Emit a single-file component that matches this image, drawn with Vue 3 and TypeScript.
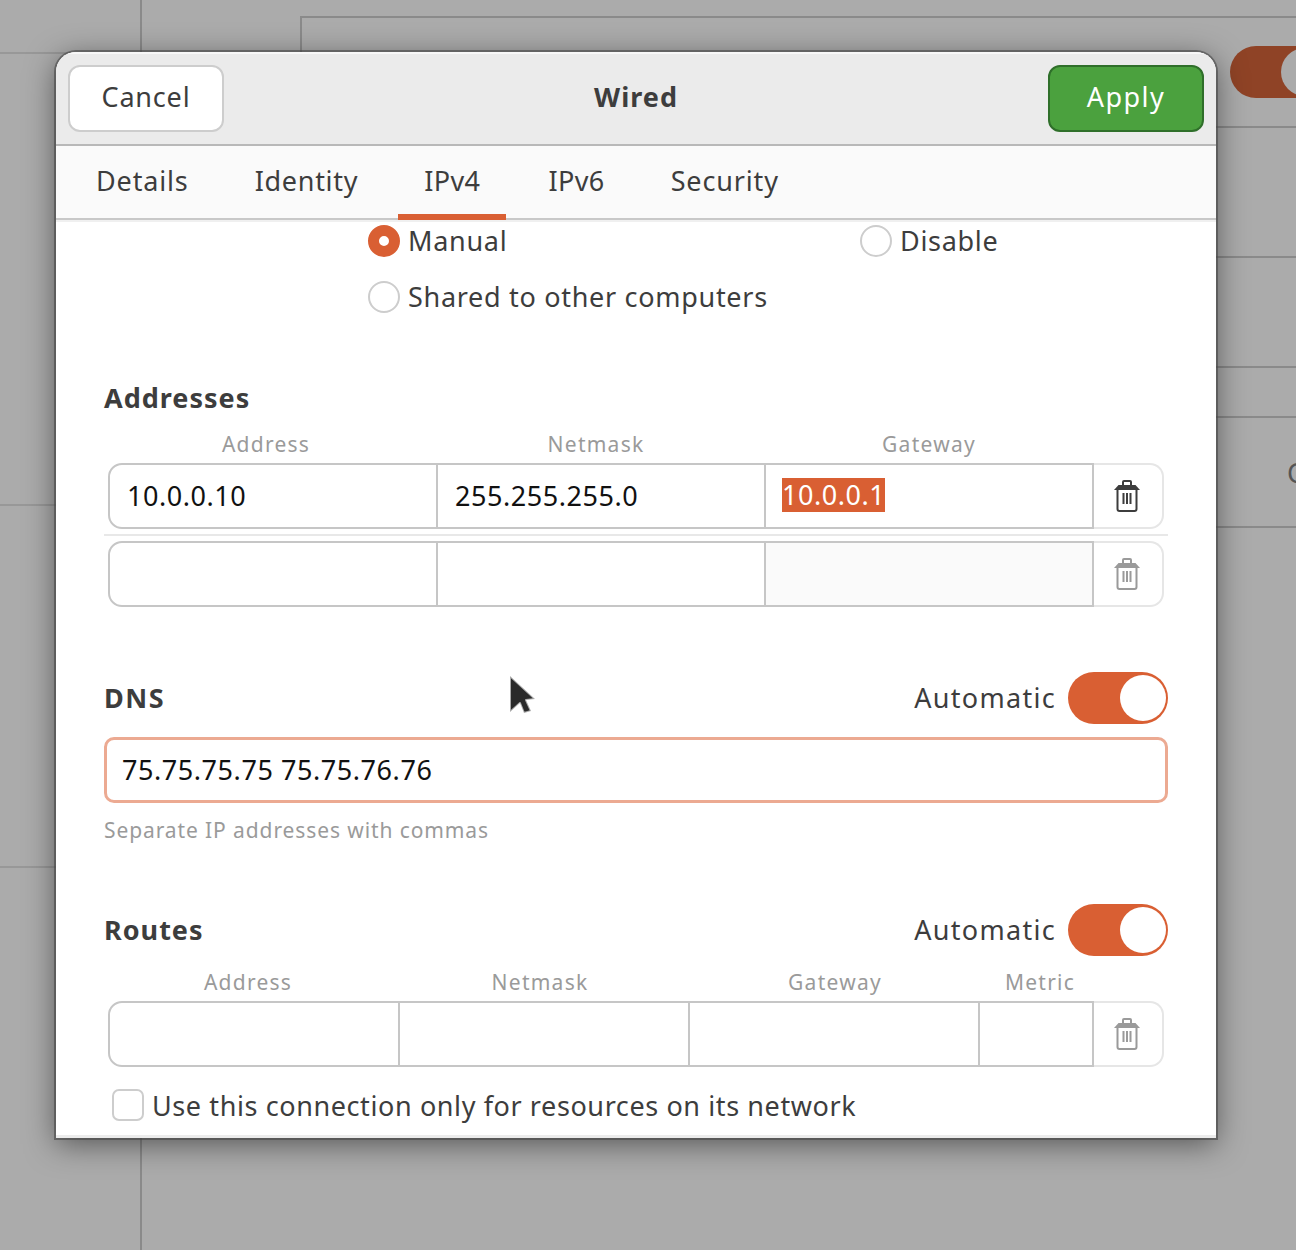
<template>
  <div class="desktop">
    <!-- dimmed window behind the dialog -->
    <div class="bg-line v" style="left: 140px; top: 0; height: 1250px"></div>
    <div class="bg-line h faint" style="left: 0; top: 52px; width: 141px"></div>
    <div class="bg-line h faint" style="left: 0; top: 504px; width: 60px"></div>
    <div class="bg-line h faint" style="left: 0; top: 866px; width: 60px"></div>
    <div class="bg-line v" style="left: 300px; top: 16px; height: 40px"></div>
    <div class="bg-line h" style="left: 300px; top: 16px; width: 996px"></div>
    <div class="bg-line h" v-for="y in rightLines" :key="y" :style="{ left: '1210px', top: y + 'px', width: '86px' }"></div>
    <div class="bg-switch"></div>
    <div class="bg-knob"></div>
    <div class="bg-letter">C</div>

    <div class="dialog">
      <header class="titlebar">
        <button class="btn">Cancel</button>
        <div class="title">Wired</div>
        <button class="btn apply">Apply</button>
      </header>

      <nav class="tabs">
        <div v-for="t in tabs" :key="t" class="tab" :class="{ active: t === 'IPv4' }">{{ t }}</div>
      </nav>

      <main class="content">
        <div class="radios">
          <div class="radio-row">
            <span class="radio checked"></span><span class="radio-label">Manual</span>
          </div>
          <div class="radio-row disable">
            <span class="radio"></span><span class="radio-label">Disable</span>
          </div>
          <div class="radio-row shared">
            <span class="radio"></span><span class="radio-label">Shared to other computers</span>
          </div>
        </div>

        <h3 class="section addresses">Addresses</h3>
        <div class="col-labels addr-cols">
          <span>Address</span><span>Netmask</span><span>Gateway</span>
        </div>
        <div class="row addr-cols">
          <div class="cell">10.0.0.10</div>
          <div class="cell">255.255.255.0</div>
          <div class="cell"><span class="selected">10.0.0.1</span></div>
          <div class="trash">
            <svg width="26" height="32" viewBox="0 0 26 32" fill="none" stroke="#3d3d3d" stroke-width="2">
              <path d="M9 5V2a1 1 0 0 1 1-1h6a1 1 0 0 1 1 1v3" />
              <path d="M4.5 5h17L26 10H0Z" fill="#3d3d3d" stroke="none" />
              <path d="M3.5 10v19a2 2 0 0 0 2 2h15a2 2 0 0 0 2-2V10" />
              <path d="M9.5 13v11M13 13v11M16.500 13v11" />
            </svg>
          </div>
        </div>
        <div class="row-sep"></div>
        <div class="row addr-cols">
          <div class="cell"></div>
          <div class="cell"></div>
          <div class="cell shaded"></div>
          <div class="trash">
            <svg width="26" height="32" viewBox="0 0 26 32" fill="none" stroke="#9a9a9a" stroke-width="2">
              <path d="M9 5V2a1 1 0 0 1 1-1h6a1 1 0 0 1 1 1v3" />
              <path d="M4.5 5h17L26 10H0Z" fill="#9a9a9a" stroke="none" />
              <path d="M3.5 10v19a2 2 0 0 0 2 2h15a2 2 0 0 0 2-2V10" />
              <path d="M9.5 13v11M13 13v11M16.500 13v11" />
            </svg>
          </div>
        </div>

        <div class="section-head dns-head">
          <h3 class="section dns-title">DNS</h3>
          <div class="auto">
            <span>Automatic</span>
            <span class="switch"><span class="knob"></span></span>
          </div>
        </div>
        <div class="dns-input">75.75.75.75 75.75.76.76</div>
        <div class="hint">Separate IP addresses with commas</div>

        <div class="section-head routes-head">
          <h3 class="section">Routes</h3>
          <div class="auto">
            <span>Automatic</span>
            <span class="switch"><span class="knob"></span></span>
          </div>
        </div>
        <div class="col-labels route-cols">
          <span>Address</span><span>Netmask</span><span>Gateway</span><span>Metric</span>
        </div>
        <div class="row route-cols">
          <div class="cell"></div>
          <div class="cell"></div>
          <div class="cell"></div>
          <div class="cell"></div>
          <div class="trash">
            <svg width="26" height="32" viewBox="0 0 26 32" fill="none" stroke="#9a9a9a" stroke-width="2">
              <path d="M9 5V2a1 1 0 0 1 1-1h6a1 1 0 0 1 1 1v3" />
              <path d="M4.5 5h17L26 10H0Z" fill="#9a9a9a" stroke="none" />
              <path d="M3.5 10v19a2 2 0 0 0 2 2h15a2 2 0 0 0 2-2V10" />
              <path d="M9.5 13v11M13 13v11M16.500 13v11" />
            </svg>
          </div>
        </div>
        <div class="check-row">
          <span class="checkbox"></span>
          <span>Use this connection only for resources on its network</span>
        </div>
      </main>
    </div>

    <svg class="cursor" width="30" height="42" viewBox="0 0 30 42">
      <path d="M1 1L26 24L17 25L22 36L15 38L11 28L1 37Z" fill="#2a2a2a" stroke="#fff" stroke-opacity="0.6" stroke-width="2" stroke-linejoin="round" />
    </svg>
  </div>
</template>

<script setup lang="ts">
const tabs: string[] = ['Details', 'Identity', 'IPv4', 'IPv6', 'Security']
const rightLines: number[] = [126, 256, 366, 416, 526]
</script>

<style>
html,
body {
  margin: 0;
  background: #ababab;
}
</style>

<style scoped>
.desktop {
  position: relative;
  width: 1296px;
  height: 1250px;
  overflow: hidden;
  background: #ababab;
  font-family: "Noto Sans", "Open Sans", sans-serif;
  font-size: 27px;
  letter-spacing: 0.7px;
  color: #3d3d3d;
  padding: 52px 0 0 56px;
  box-sizing: border-box;
}

.bg-line {
  position: absolute;
  background: #8a8a8a;
}
.bg-line.v {
  width: 2px;
}
.bg-line.h {
  height: 2px;
}
.bg-line.faint {
  background: #989898;
}
.bg-switch {
  position: absolute;
  left: 1230px;
  top: 46px;
  width: 100px;
  height: 52px;
  border-radius: 26px;
  background: #8f4326;
}
.bg-knob {
  position: absolute;
  left: 1281px;
  top: 48px;
  width: 48px;
  height: 48px;
  border-radius: 50%;
  background: #ababab;
}
.bg-letter {
  position: absolute;
  left: 1287px;
  top: 454px;
  color: #555;
}

.dialog {
  position: relative;
  width: 1160px;
  height: 1086px;
  border-radius: 20px 20px 0 0;
  overflow: hidden;
  background: #fff;
  display: flex;
  flex-direction: column;
  box-shadow: 0 0 0 2px rgba(70, 70, 70, 0.6), 0 6px 30px rgba(0, 0, 0, 0.5);
}

.titlebar {
  height: 92px;
  flex: none;
  box-sizing: border-box;
  padding: 11px 12px 0;
  display: flex;
  justify-content: space-between;
  background: #ebebeb;
  border-top: 2px solid #f8f8f8;
}
.btn {
  width: 156px;
  height: 67px;
  box-sizing: border-box;
  border: 2px solid #cdcdcd;
  border-radius: 12px;
  background: #fff;
  color: #3d3d3d;
  font: inherit;
  letter-spacing: 0.8px;
  padding: 0 0 5px;
}
.btn.apply {
  background: #4ba13e;
  border-color: #2f6f2a;
  color: #fff;
  letter-spacing: 1.5px;
}
.title {
  font-weight: 700;
  line-height: 64px;
  letter-spacing: 1px;
}

.tabs {
  height: 76px;
  flex: none;
  box-sizing: border-box;
  display: flex;
  padding-left: 14px;
  gap: 14px;
  background: #fafafa;
  border-top: 2px solid #b8b8b8;
  border-bottom: 2px solid #c8c8c8;
}
.tab {
  padding: 0 26px;
  line-height: 70px;
  height: 74px;
  box-sizing: border-box;
  letter-spacing: 0.85px;
}
.tab:nth-child(2) {
  letter-spacing: 0.7px;
}
.tab:nth-child(3) {
  letter-spacing: 0.4px;
}
.tab:nth-child(4) {
  letter-spacing: 0.4px;
  margin-left: 2px;
}
.tab.active {
  border-bottom: 6px solid #d95f33;
}

.content {
  flex: 1;
  padding: 0 48px;
  min-height: 0;
  overflow: hidden;
  box-sizing: border-box;
  border-top: 2px solid #f0f0f0;
  border-bottom: 3px solid #ececec;
}

.radios {
  position: relative;
  height: 102px;
}
.radio-row {
  position: absolute;
  left: 264px;
  top: 3px;
  display: flex;
  align-items: center;
  gap: 8px;
  height: 32px;
}
.radio-row.disable {
  left: 756px;
}
.radio-row.shared {
  top: 59px;
}
.radio-label {
  margin-top: -2px;
}
.radio {
  width: 32px;
  height: 32px;
  box-sizing: border-box;
  border: 2px solid #cdcdcd;
  border-radius: 50%;
  background: #fff;
}
.radio.checked {
  border: 11px solid #d95f33;
}

.section {
  margin: 0;
  font-size: 27px;
  font-weight: 700;
  line-height: 36px;
  letter-spacing: 1px;
}
.dns-title {
  letter-spacing: 1.5px;
}
.addresses {
  margin-top: 56px;
}

.col-labels {
  height: 30px;
  line-height: 30px;
  font-size: 21px;
  letter-spacing: 1.25px;
  color: #9a9a9a;
  margin-top: 13px;
  text-align: center;
}
.routes-head + .col-labels {
  margin-top: 11px;
}
.addr-cols {
  display: grid;
  grid-template-columns: 330px 328px 328px 70px;
  margin-left: 4px;
  width: 1056px;
}
.route-cols {
  display: grid;
  grid-template-columns: 292px 290px 290px 114px 70px;
  margin-left: 4px;
  width: 1056px;
}
.col-labels.addr-cols span:nth-child(1) {
  padding-right: 14px;
}
.col-labels.addr-cols span:nth-child(2) {
  padding-right: 12px;
}
.col-labels.addr-cols span:nth-child(3) {
  padding-right: 2px;
}
.col-labels.route-cols span:nth-child(1) {
  padding-right: 12px;
}
.col-labels.route-cols span:nth-child(2) {
  padding-right: 10px;
}
.col-labels.route-cols span:nth-child(4) {
  padding-left: 6px;
}

.row {
  height: 66px;
  font-size: 27px;
  letter-spacing: 0.55px;
  color: #111;
}
.col-labels + .row {
  margin-top: 4px;
}
.cell {
  border: 2px solid #c6c6c6;
  border-left: 0;
  padding-left: 17px;
  line-height: 62px;
  box-sizing: border-box;
  white-space: nowrap;
}
.cell:first-child {
  border-left: 2px solid #c6c6c6;
  border-radius: 14px 0 0 14px;
}
.cell.shaded {
  background: #fafafa;
}
.selected {
  display: inline-block;
  line-height: 34px;
  vertical-align: top;
  margin: 13px 0 0 -1px;
  background: #d95f33;
  color: #fff;
}
.trash {
  display: flex;
  align-items: center;
  justify-content: center;
  box-sizing: border-box;
  height: 66px;
  padding-right: 2px;
  border: 2px solid #e6e6e6;
  border-left: 0;
  border-radius: 0 14px 14px 0;
}
.row-sep {
  height: 2px;
  margin: 5px 0;
  background: #e8e8e8;
}

.section-head {
  display: flex;
  align-items: center;
  justify-content: space-between;
  height: 52px;
}
.dns-head {
  margin-top: 65px;
}
.routes-head {
  margin-top: 60px;
}
.auto {
  display: flex;
  align-items: center;
  gap: 12px;
  letter-spacing: 1.3px;
}
.auto > span:first-child {
  margin-top: -2px;
}
.switch {
  position: relative;
  width: 100px;
  height: 52px;
  border-radius: 26px;
  background: #d95f33;
}
.knob {
  position: absolute;
  right: 2px;
  top: 3px;
  width: 46px;
  height: 46px;
  border-radius: 50%;
  background: #fff;
}

.dns-input {
  margin-top: 13px;
  height: 66px;
  box-sizing: border-box;
  border: 3px solid #ecaa92;
  border-radius: 10px;
  padding-left: 15px;
  line-height: 60px;
  letter-spacing: 0.56px;
  color: #111;
}
.hint {
  margin-top: 13px;
  font-size: 21px;
  line-height: 28px;
  letter-spacing: 0.9px;
  color: #9a9a9a;
}

.check-row {
  display: flex;
  align-items: center;
  gap: 8px;
  margin: 22px 0 0 8px;
  height: 32px;
  letter-spacing: 0.6px;
}
.checkbox {
  width: 32px;
  height: 32px;
  box-sizing: border-box;
  border: 2px solid #cdcdcd;
  border-radius: 7px;
}

.cursor {
  position: absolute;
  left: 509px;
  top: 675px;
  filter: blur(0.6px);
}
</style>
